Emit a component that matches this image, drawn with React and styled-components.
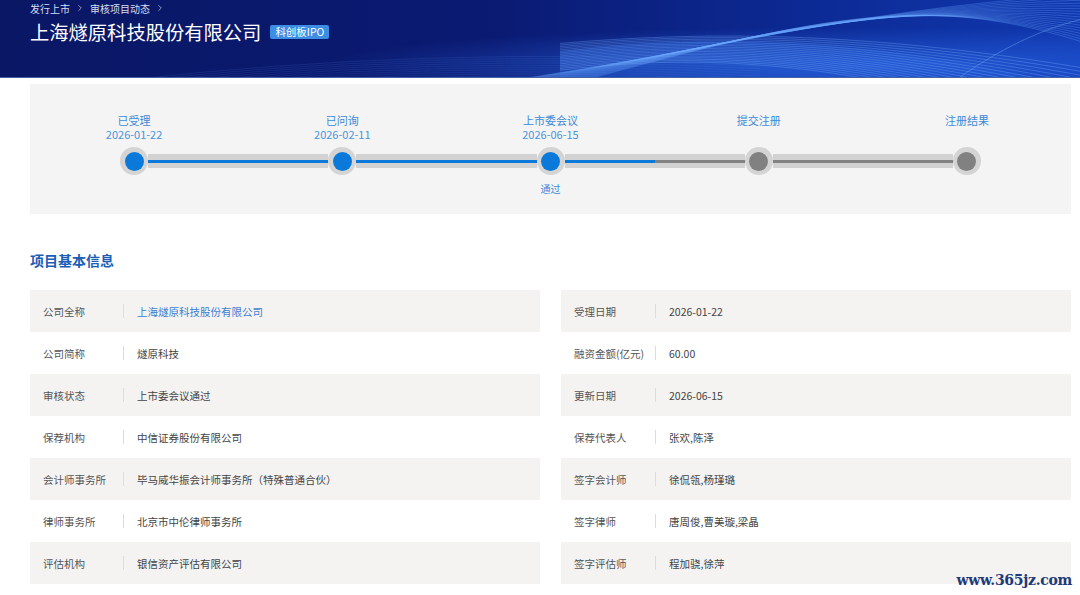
import React from 'react';
import styled, { createGlobalStyle } from 'styled-components';
import { ChevronRight } from 'lucide-react';

const FONT = '"Noto Sans CJK SC", "Noto Sans", sans-serif';

const GlobalStyle = createGlobalStyle`
  html, body {
    margin: 0;
    padding: 0;
    background: #ffffff;
    font-family: ${FONT};
  }
  * { box-sizing: border-box; }
`;

const Page = styled.div`
  position: relative;
  width: 1080px;
  height: 595px;
  overflow: hidden;
  background: #fff;
`;

const Header = styled.header`
  position: relative;
  height: 78px;
  background: linear-gradient(90deg, #0a1765 0%, #0a1a72 45%, #0c2a94 75%, #1038b0 100%);
  border-bottom: 1px solid #4660a6;
  overflow: hidden;
`;

const Waves = styled.svg`
  position: absolute;
  inset: 0;
  width: 100%;
  height: 100%;
`;

const HeaderInner = styled.div`
  position: relative;
  padding: 0 0 0 30px;
  color: #fff;
`;

const Crumbs = styled.div`
  display: flex;
  align-items: center;
  gap: 5px;
  height: 16px;
  font-size: 10px;
  color: #d8def0;
`;

const TitleRow = styled.div`
  display: flex;
  align-items: center;
  gap: 9px;
  margin-top: 3px;
`;

const Title = styled.h1`
  margin: 0;
  font-size: 19.3px;
  line-height: 26px;
  font-weight: 400;
  color: #ffffff;
`;

const Badge = styled.span`
  display: inline-block;
  padding: 0 5px;
  height: 14px;
  line-height: 14px;
  font-size: 10.5px;
  background: #3b8ee4;
  color: #fff;
  border-radius: 2px;
`;

const Content = styled.main`
  padding: 6px 9px 0 30px;
`;

const Progress = styled.section`
  display: grid;
  grid-template-columns: repeat(5, 1fr);
  height: 130px;
  padding-top: 29px;
  background: #f4f4f4;
`;

const Step = styled.div`
  display: flex;
  flex-direction: column;
  align-items: center;
`;

const StepHead = styled.div`
  height: 34px;
  text-align: center;
  font-size: 11px;
  line-height: 14px;
  color: #3e8ad8;
`;

const StepDate = styled.div`
  color: #4b93dc;
`;

const Track = styled.div`
  display: flex;
  align-items: center;
  width: 100%;
`;

const Half = styled.div`
  flex: 1;
  height: 14px;
  display: flex;
  align-items: center;
  background: ${(p) => (p.$hidden ? 'transparent' : '#d2d2d2')};

  &::after {
    content: '';
    display: ${(p) => (p.$hidden ? 'none' : 'block')};
    width: 100%;
    height: 3px;
    background: ${(p) => (p.$active ? '#0a79d9' : '#828282')};
  }
`;

const Dot = styled.div`
  width: 28px;
  height: 28px;
  flex: none;
  border-radius: 50%;
  background: #d4d4d4;
  display: flex;
  align-items: center;
  justify-content: center;

  &::after {
    content: '';
    width: 19px;
    height: 19px;
    border-radius: 50%;
    background: ${(p) => (p.$active ? '#0a79d9' : '#818181')};
  }
`;

const StepNote = styled.div`
  margin-top: 7px;
  font-size: 10px;
  line-height: 13px;
  color: #3e8ad8;
`;

const SectionTitle = styled.h2`
  margin: 36px 0 20px;
  font-size: 14px;
  line-height: 20px;
  font-weight: 700;
  color: #1b5eb5;
`;

const InfoGrid = styled.div`
  display: grid;
  grid-template-columns: 1fr 1fr;
  column-gap: 21px;
`;

const Cell = styled.div`
  display: flex;
  align-items: center;
  height: 42px;
  padding-left: 13px;
  font-size: 10.5px;
  background: ${(p) => (p.$shaded ? '#f4f3f2' : '#ffffff')};
`;

const CellLabel = styled.span`
  width: ${(p) => p.$width}px;
  color: #555;
  white-space: nowrap;
`;

const Divider = styled.span`
  width: 1px;
  height: 14px;
  background: #dcdcdc;
  margin-right: 13px;
`;

const CellValue = styled.span`
  color: ${(p) => (p.$link ? '#3a7fd2' : '#444')};
  white-space: nowrap;
`;

const Watermark = styled.div`
  position: absolute;
  right: 8px;
  bottom: 7px;
  font-family: "DejaVu Serif", "Liberation Serif", serif;
  font-weight: 700;
  font-size: 14px;
  letter-spacing: -0.3px;
  color: #1d3a7a;
`;

const steps = [
  { label: '已受理', date: '2026-01-22', active: true },
  { label: '已问询', date: '2026-02-11', active: true },
  { label: '上市委会议', date: '2026-06-15', active: true, note: '通过' },
  { label: '提交注册', active: false },
  { label: '注册结果', active: false },
];

const rows = [
  ['公司全称', '上海燧原科技股份有限公司', '受理日期', '2026-01-22', true],
  ['公司简称', '燧原科技', '融资金额(亿元)', '60.00'],
  ['审核状态', '上市委会议通过', '更新日期', '2026-06-15'],
  ['保荐机构', '中信证券股份有限公司', '保荐代表人', '张欢,陈泽'],
  ['会计师事务所', '毕马威华振会计师事务所（特殊普通合伙）', '签字会计师', '徐侃瓴,杨瑾璐'],
  ['律师事务所', '北京市中伦律师事务所', '签字律师', '唐周俊,曹美璇,梁晶'],
  ['评估机构', '银信资产评估有限公司', '签字评估师', '程加骁,徐萍'],
];

const WaveLines = () => {
  const a = [];
  const b = [];
  const c = [];
  for (let i = 0; i < 18; i++) {
    a.push(
      <path key={'a' + i}
        d={`M ${520 + i * 4} 80 C ${720 + i * 6} ${50 - i * 2}, ${860 + i * 4} ${8 - i}, 1090 ${-6 + i * 3}`}
        stroke="#6aa6ff" strokeOpacity={0.4} strokeWidth="0.8" fill="none" />
    );
    b.push(
      <path key={'b' + i}
        d={`M 560 ${44 + i * 1.6} C 720 ${30 + i * 1.2}, 880 ${34 + i * 2}, 1090 ${70 + i * 4}`}
        stroke="#78b0ff" strokeOpacity={0.42} strokeWidth="0.8" fill="none" />
    );
    c.push(
      <path key={'c' + i}
        d={`M 120 ${82 + i * 2} Q 420 ${46 + i * 2} 760 ${62 + i * 2.5}`}
        stroke="#4f86e8" strokeOpacity={0.2} strokeWidth="0.8" fill="none" />
    );
  }
  return (
    <Waves viewBox="0 0 1080 78" preserveAspectRatio="none">
      <defs>
        <radialGradient id="glow" cx="0.8" cy="0.85" r="0.5">
          <stop offset="0" stopColor="#2f70f2" stopOpacity="0.6" />
          <stop offset="1" stopColor="#2f70f2" stopOpacity="0" />
        </radialGradient>
      </defs>
      <rect x="0" y="0" width="1080" height="78" fill="url(#glow)" />
      <path d="M 560 52 C 700 34, 880 36, 1080 90 L 1080 78 L 560 78 Z" fill="#2a66e0" fillOpacity="0.3" />
      {c}
      {a}
      {b}
      <path d="M 960 78 C 1000 50, 1040 30, 1080 20" stroke="#7ab2ff" strokeOpacity="0.4" strokeWidth="1" fill="none" />
    </Waves>
  );
};

const current = 2;

const App = () => (
  <Page>
    <GlobalStyle />
    <Header>
      <WaveLines />
      <HeaderInner>
        <Crumbs>
          <span>发行上市</span>
          <ChevronRight size={10} strokeWidth={1.5} />
          <span>审核项目动态</span>
          <ChevronRight size={10} strokeWidth={1.5} />
        </Crumbs>
        <TitleRow>
          <Title>上海燧原科技股份有限公司</Title>
          <Badge>科创板IPO</Badge>
        </TitleRow>
      </HeaderInner>
    </Header>

    <Content>
      <Progress>
        {steps.map((s, i) => (
          <Step key={s.label}>
            <StepHead>
              <div>{s.label}</div>
              {s.date && <StepDate>{s.date}</StepDate>}
            </StepHead>
            <Track>
              <Half $hidden={i === 0} $active={i <= current} />
              <Dot $active={s.active} />
              <Half $hidden={i === steps.length - 1} $active={i <= current} />
            </Track>
            {s.note && <StepNote>{s.note}</StepNote>}
          </Step>
        ))}
      </Progress>

      <SectionTitle>项目基本信息</SectionTitle>

      <InfoGrid>
        {rows.map(([l1, v1, l2, v2, link], i) => (
          <React.Fragment key={l1}>
            <Cell $shaded={i % 2 === 0}>
              <CellLabel $width={80}>{l1}</CellLabel>
              <Divider />
              <CellValue $link={link}>{v1}</CellValue>
            </Cell>
            <Cell $shaded={i % 2 === 0}>
              <CellLabel $width={81}>{l2}</CellLabel>
              <Divider />
              <CellValue>{v2}</CellValue>
            </Cell>
          </React.Fragment>
        ))}
      </InfoGrid>
    </Content>

    <Watermark>www.365jz.com</Watermark>
  </Page>
);

export default App;
